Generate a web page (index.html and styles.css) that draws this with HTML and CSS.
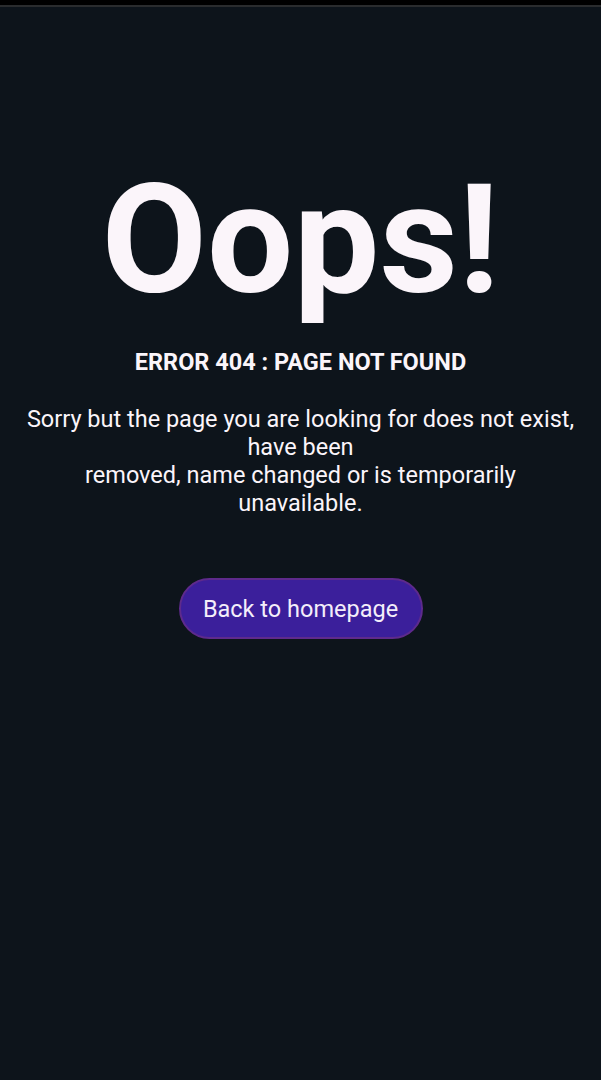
FILE: index.html
```html
<!DOCTYPE html>
<html lang="en">
<head>
<meta charset="utf-8">
<title>404</title>
<link rel="stylesheet" href="styles.css">
</head>
<body>
<div class="statusbar"></div>
<main class="page">
  <h1 class="oops">Oops!</h1>
  <h2 class="code">ERROR 404 : PAGE NOT FOUND</h2>
  <p class="msg">Sorry but the page you are looking for does not exist, have been<br>removed, name changed or is temporarily unavailable.</p>
  <a class="btn" href="#">Back to homepage</a>
</main>
</body>
</html>
```
FILE: styles.css
```css
html, body {
  margin: 0;
  padding: 0;
  background: #0d141b;
  height: 100%;
}
body {
  font-family: Roboto, "Liberation Sans", sans-serif;
  color: #fbf5fa;
}
.statusbar {
  height: 5px;
  background: #000;
  border-bottom: 2px solid #2a2c2e;
}
.page {
  display: flex;
  flex-direction: column;
  align-items: center;
  text-align: center;
  padding: 0 20px;
}
.oops {
  margin: 158px 0 0;
  font-size: 153px;
  font-weight: 700;
  line-height: 150px;
}
.code {
  margin: 33px 0 0;
  font-size: 23.5px;
  font-weight: 700;
  line-height: 28px;
}
.msg {
  margin: 29px 0 0;
  font-size: 23.5px;
  line-height: 28px;
  max-width: 561px;
}
.btn {
  margin-top: 61px;
  display: inline-flex;
  align-items: center;
  justify-content: center;
  width: 244px;
  height: 61px;
  box-sizing: border-box;
  border-radius: 31px;
  background: #3b1f9b;
  border: 2px solid #5e2a8c;
  color: #f4eefa;
  font-size: 23.5px;
  text-decoration: none;
}
```
